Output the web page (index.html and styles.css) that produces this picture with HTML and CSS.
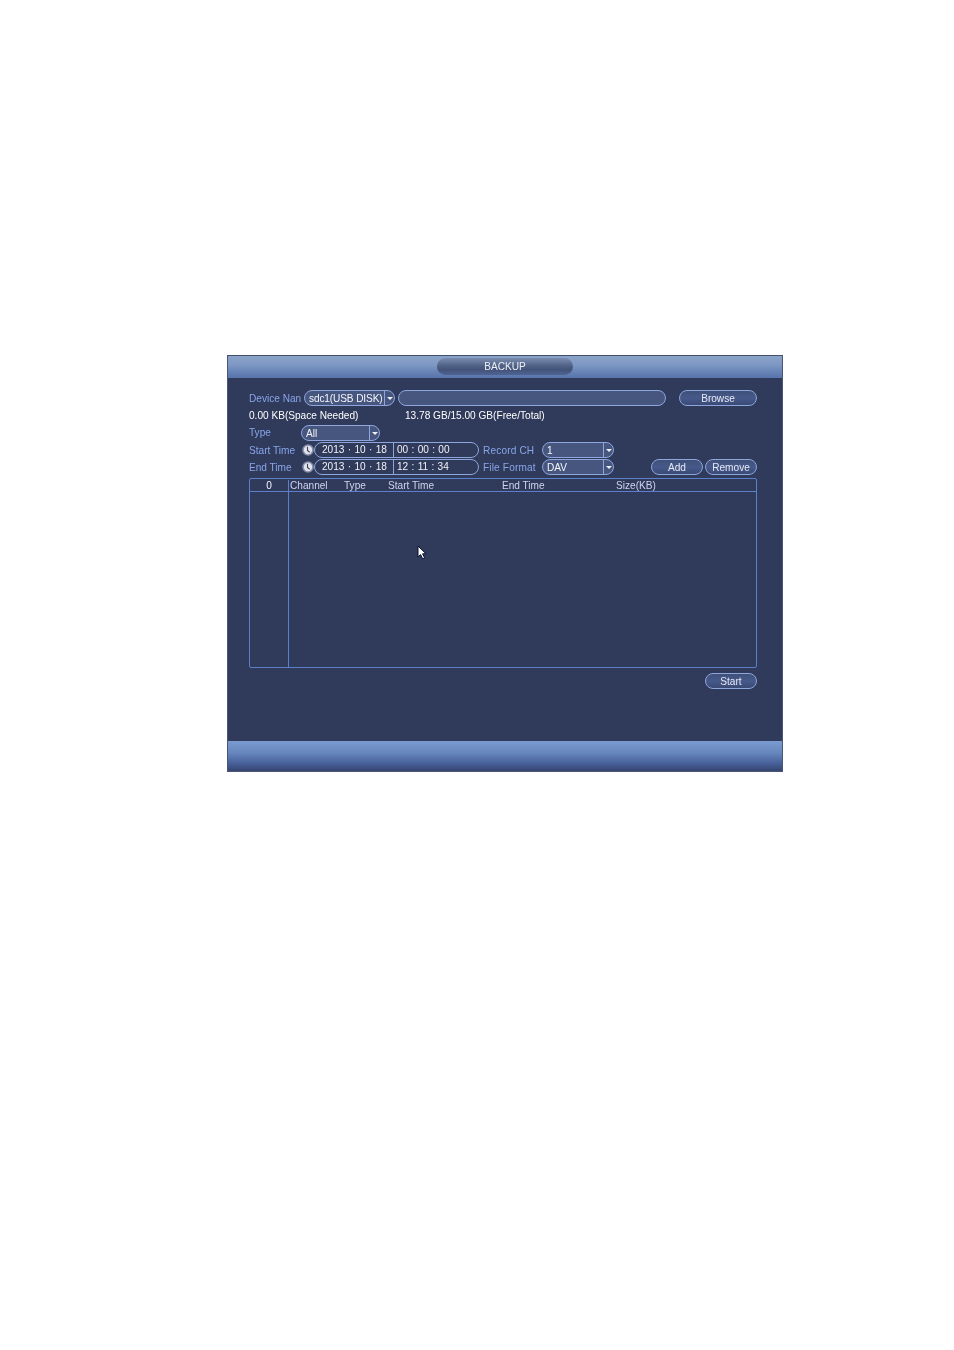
FILE: index.html
```html
<!DOCTYPE html>
<html lang="en">
<head>
<meta charset="utf-8">
<title>Backup</title>
<link rel="stylesheet" href="styles.css">
</head>
<body>
<main class="panel">
  <header class="titlebar"><div class="title">BACKUP</div></header>
  <section class="content">
    <div class="row row-device">
      <span class="label w-device">Device Nan</span>
      <div class="select w-devsel"><span class="value tight">sdc1(USB DISK)</span><span class="arrow"></span></div>
      <div class="input w-path"></div>
      <button class="btn w-browse">Browse</button>
    </div>
    <div class="row row-info">
      <span class="info w-needed">0.00 KB(Space Needed)</span>
      <span class="info">13.78 GB/15.00 GB(Free/Total)</span>
    </div>
    <div class="row row-type">
      <span class="label w-type">Type</span>
      <div class="select w-typesel"><span class="value">All</span><span class="arrow"></span></div>
    </div>
    <div class="row row-time">
      <span class="label w-time">Start Time</span>
      <svg class="clock" viewBox="0 0 12 12"><circle cx="6" cy="6" r="5.8" fill="#868da9"/><circle cx="6" cy="6" r="4.2" fill="#e2e4ec"/><path d="M5.5 2.8v3.6l2.2 1.8" stroke="#3a4262" stroke-width="1.1" fill="none"/></svg>
      <div class="datetime"><span class="date">2013 <i>·</i> 10 <i>·</i> 18</span><span class="clocktime">00 <i>:</i> 00 <i>:</i> 00</span></div>
      <span class="label w-after">Record CH</span>
      <div class="select w-chsel"><span class="value">1</span><span class="arrow"></span></div>
    </div>
    <div class="row row-time row-end">
      <span class="label w-time">End Time</span>
      <svg class="clock" viewBox="0 0 12 12"><circle cx="6" cy="6" r="5.8" fill="#868da9"/><circle cx="6" cy="6" r="4.2" fill="#e2e4ec"/><path d="M5.5 2.8v3.6l2.2 1.8" stroke="#3a4262" stroke-width="1.1" fill="none"/></svg>
      <div class="datetime"><span class="date">2013 <i>·</i> 10 <i>·</i> 18</span><span class="clocktime">12 <i>:</i> 11 <i>:</i> 34</span></div>
      <span class="label w-after">File Format</span>
      <div class="select w-chsel"><span class="value">DAV</span><span class="arrow"></span></div>
      <button class="btn w-add">Add</button>
      <button class="btn w-remove">Remove</button>
    </div>
    <div class="table">
      <div class="thead">
        <span class="c-idx">0</span>
        <span class="c-ch">Channel</span>
        <span class="c-type">Type</span>
        <span class="c-start">Start Time</span>
        <span class="c-end">End Time</span>
        <span class="c-size">Size(KB)</span>
      </div>
      <div class="tbody"><div class="tcol"></div></div>
    </div>
    <div class="row row-start"><button class="btn w-start">Start</button></div>
  </section>
  <footer class="footerbar"></footer>
</main>
<svg class="pointer" viewBox="0 0 10 15"><path d="M1 1v11l2.6-2.4 2 4.2 2-1-2-4h3.4z" fill="#fff" stroke="#0b1030" stroke-width="1"/></svg>
</body>
</html>
```

FILE: styles.css
```css
* { box-sizing: border-box; }
html, body { margin: 0; padding: 0; background: #fff; }
body { position: relative; width: 954px; height: 1350px; overflow: hidden; font-family: "Liberation Sans", Arial, sans-serif; font-size: 10.1px; }

.panel { position: absolute; left: 227px; top: 355px; width: 556px; height: 417px; display: flex; flex-direction: column; background: #303a5a; border: 1px solid #4a5674; border-top-color: #414f6e; filter: blur(0.2px); }

.titlebar { height: 22px; flex: none; display: flex; justify-content: center; align-items: center; padding-bottom: 2px; background: linear-gradient(#8ba3c6 0, #7d98c4 40%, #5673ab 100%); }
.title { width: 136px; height: 17px; border-radius: 9px; text-align: center; line-height: 17px; color: #eef0f6; background: linear-gradient(#7a8db0, #4e5f84 48%, #435379 70%, #4f6494); }

.content { flex: 1; padding: 12px 0 0 21px; }
.footerbar { height: 30px; flex: none; background: linear-gradient(#7a9bd0 0, #6686bd 40%, #47609a 75%, #35446f 100%); }

.row { display: flex; align-items: center; height: 16px; }
.row-info { height: 16px; margin-top: 1px; color: #fff; }
.row-type { margin-top: 2px; }
.row-time { margin-top: 1px; }
.row-end { margin-top: 1px; }
.row-start { justify-content: flex-end; width: 508px; margin-top: 5px; }

.label { color: #88a6ea; flex: none; white-space: nowrap; }
.info { flex: none; white-space: nowrap; }
.w-device { width: 55px; }
.w-needed { width: 156px; }
.w-type { width: 52px; margin-top: -2px; }
.w-time { width: 53px; }
.w-after { width: 59px; margin-left: 4px; letter-spacing: 0.15px; }

.select, .input, .btn, .datetime { flex: none; height: 16px; border: 1px solid #8ea6dc; border-radius: 8px; background: #46567f; color: #f6f7fb; font: inherit; }
.select { display: flex; align-items: center; justify-content: space-between; padding-left: 4px; }
.value { white-space: nowrap; }
.tight { letter-spacing: -0.12px; }
.arrow { width: 10px; height: 14px; border-left: 1px solid #8ea6dc; position: relative; flex: none; }
.arrow::after { content: ""; position: absolute; left: 1.5px; top: 5.5px; border: 3px solid transparent; border-top: 3px solid #eef0f6; }

.w-devsel { width: 91px; }
.w-path { width: 268px; margin-left: 3px; }
.w-browse { width: 78px; margin-left: 13px; }
.w-typesel { width: 79px; }
.w-chsel { width: 72px; }
.w-add { width: 52px; margin-left: 37px; }
.w-remove { width: 52px; margin-left: 2px; }
.w-start { width: 52px; }

.btn { padding: 0; text-align: center; background: linear-gradient(#3f5078, #46598a 50%, #3a4a75); color: #e6e9f3; }

.clock { width: 12px; height: 12px; flex: none; }
.datetime { width: 165px; display: flex; align-items: center; color: #f0f2f8; background: #303a5a; line-height: 14px; }
.date, .clocktime { height: 14px; white-space: nowrap; }
.date { width: 79px; padding-left: 7px; border-right: 1px solid #8ea6dc; flex: none; }
.clocktime { padding-left: 3px; }
.datetime i { font-style: normal; margin: 0 0.5px; }

.table { width: 508px; height: 190px; margin-top: 3px; border: 1px solid #5d7fc7; border-radius: 2px; display: flex; flex-direction: column; }
.thead { height: 13px; flex: none; display: flex; align-items: center; border-bottom: 1px solid #5d7fc7; color: #ced6ee; line-height: 12px; padding-top: 1px; }
.thead span { flex: none; white-space: nowrap; }
.c-idx { width: 38px; text-align: center; color: #f6f7fb; }
.c-ch { width: 56px; padding-left: 1px; border-left: 1px solid #5d7fc7; }
.c-type { width: 44px; }
.c-start { width: 114px; }
.c-end { width: 114px; }
.c-size { width: 60px; }
.tbody { flex: 1; }
.tcol { width: 39px; height: 100%; border-right: 1px solid #5d7fc7; }

.pointer { position: absolute; left: 416.5px; top: 545px; width: 10px; height: 15px; }
```
